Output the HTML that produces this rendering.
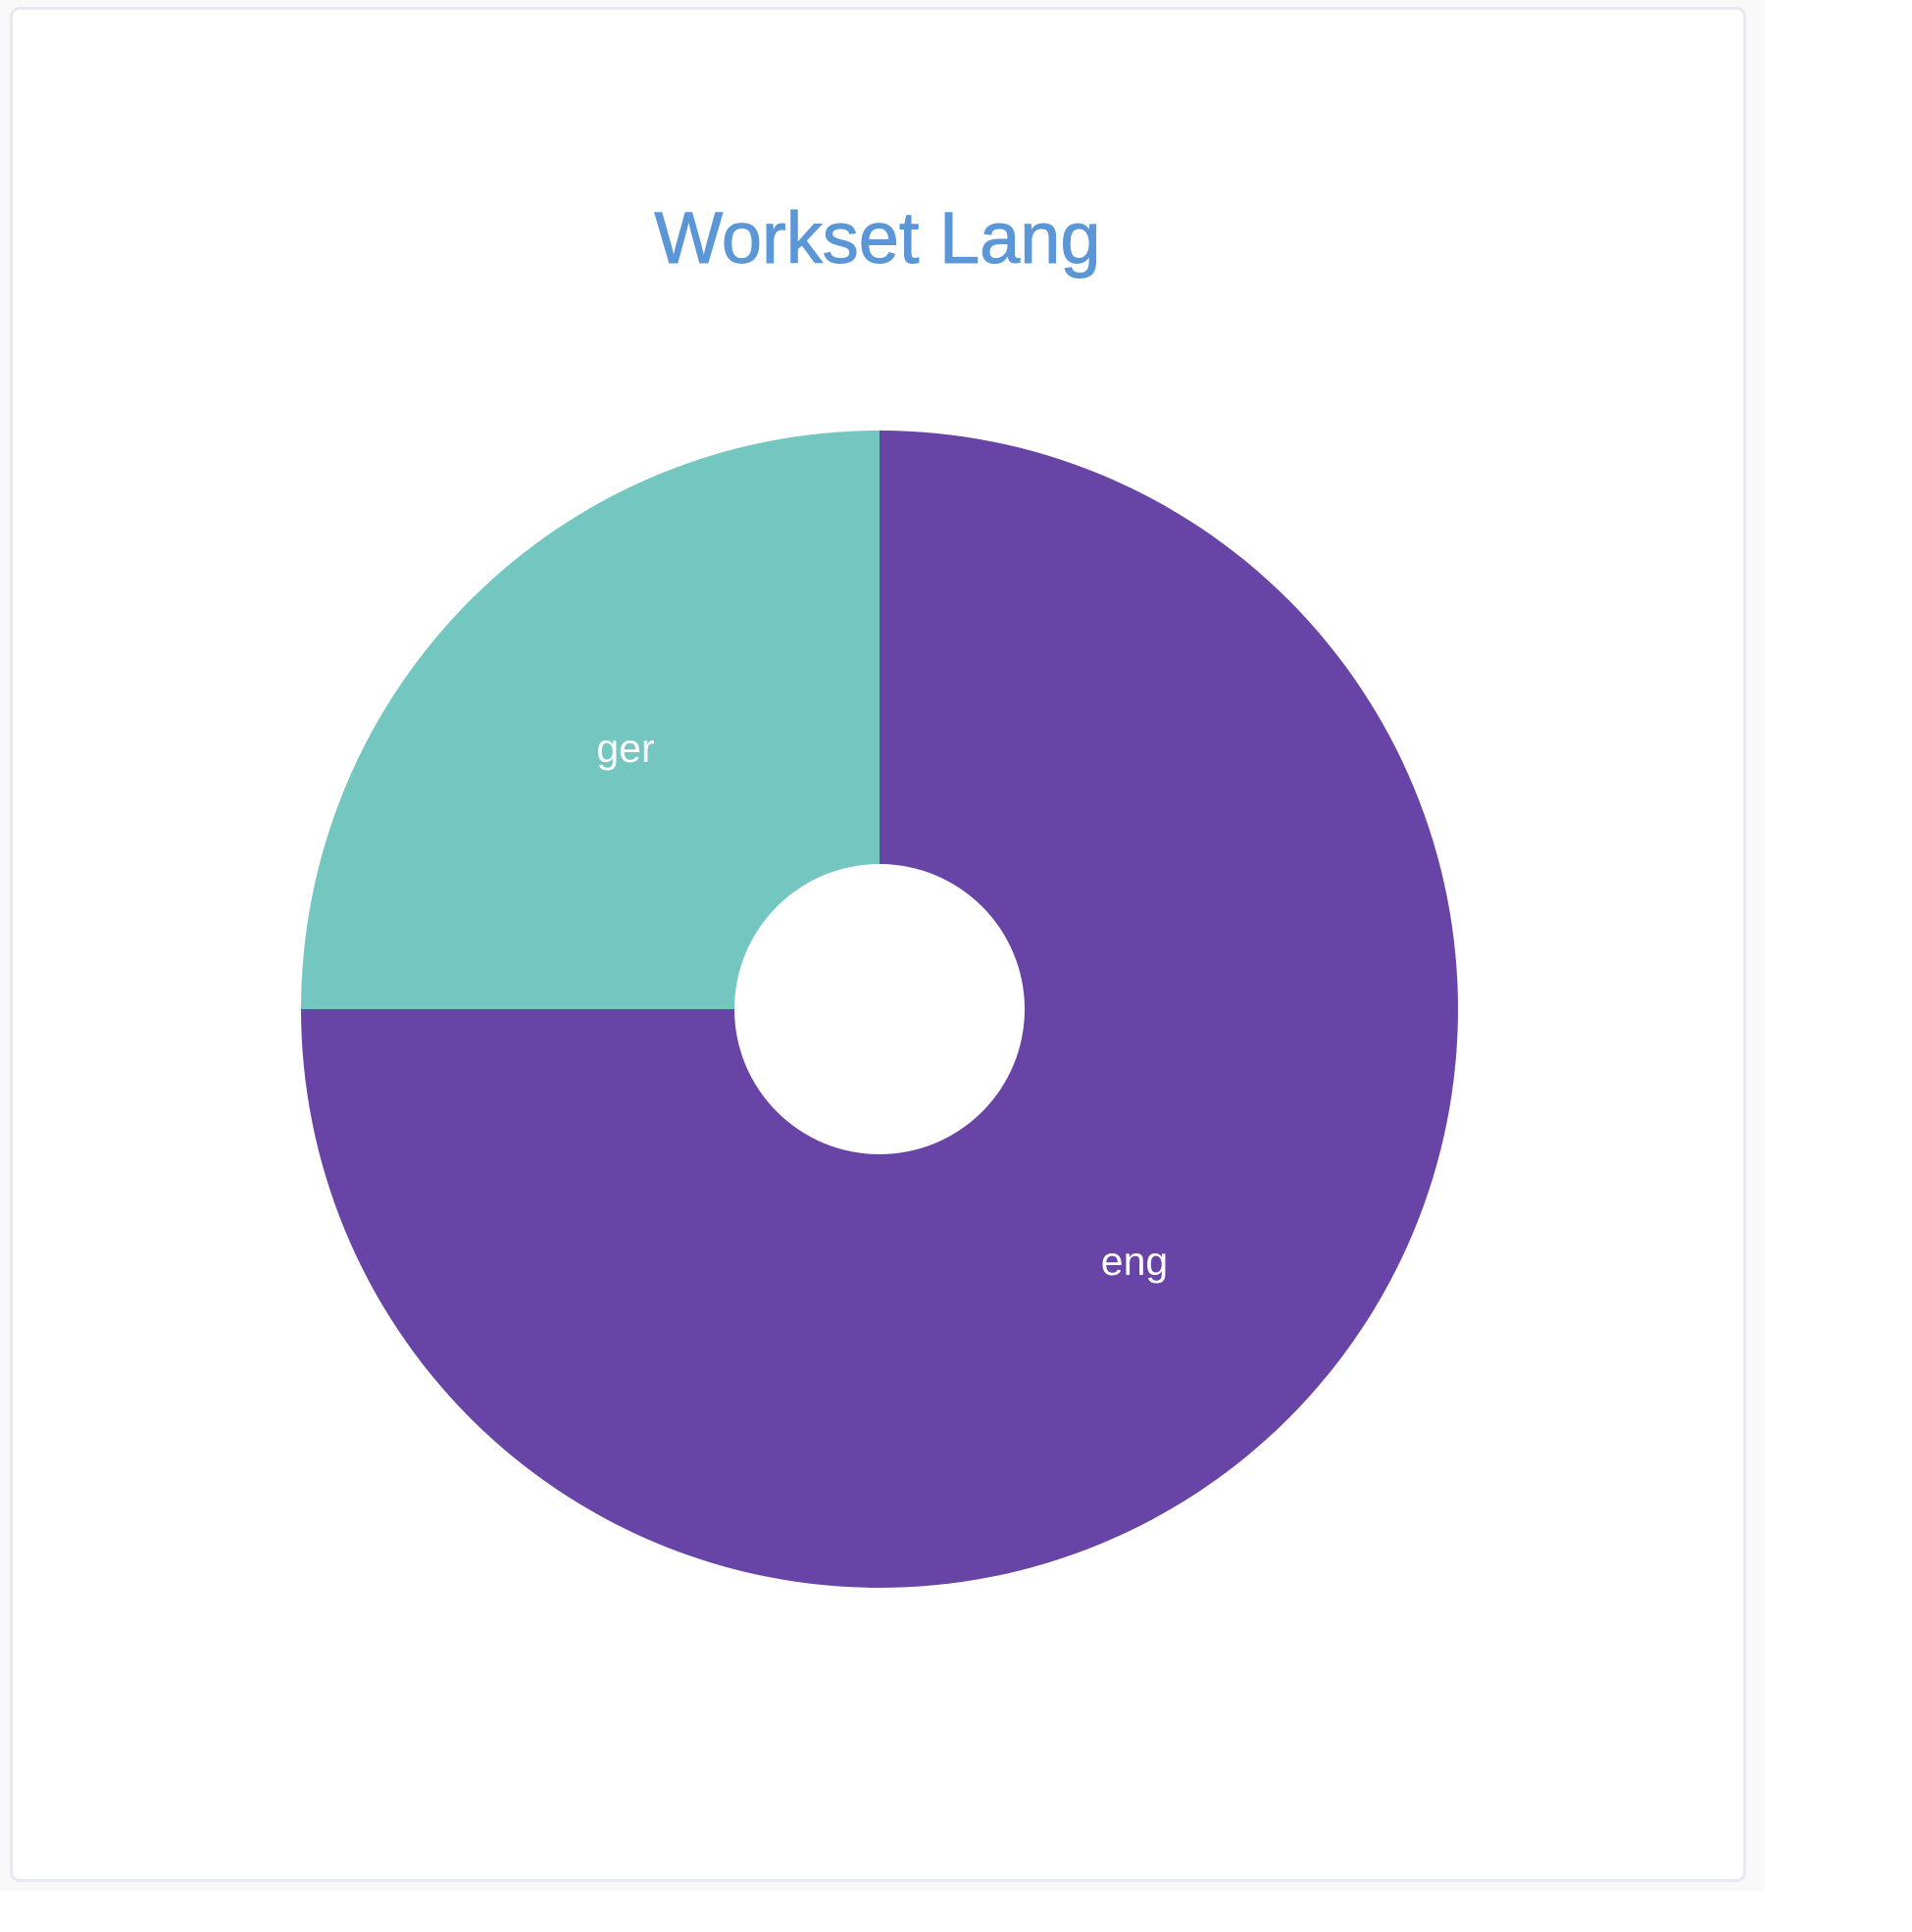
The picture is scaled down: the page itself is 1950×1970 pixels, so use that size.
<!DOCTYPE html>
<html><head><style>
html,body{margin:0;padding:0;background:#fff;width:1950px;height:1970px;overflow:hidden}
.bg{position:absolute;left:0;top:0;width:1800px;height:1928px;background:#f9f9fa}
.card{position:absolute;left:10px;top:7px;width:1765px;height:1906px;background:#fff;border:3px solid #e8e9ef;border-radius:10px}
svg{position:absolute;left:0;top:0}
</style></head><body>
<div class="bg"></div>
<div class="card"></div>
<svg width="1950" height="1970" xmlns="http://www.w3.org/2000/svg">
<text x="895" y="268" text-anchor="middle" font-family="Liberation Sans, sans-serif" font-size="74" fill="#5b96d6" stroke="#5b96d6" stroke-width="1">Workset Lang</text>
<path d="M897 1029 L897 439 A590 590 0 1 1 307 1029 Z" fill="#6744a6"/>
<path d="M897 1029 L307 1029 A590 590 0 0 1 897 439 Z" fill="#74c6c1"/>
<circle cx="897" cy="1029" r="148" fill="#fff"/>
<text x="638" y="777" text-anchor="middle" font-family="Liberation Sans, sans-serif" font-size="41" fill="#fff">ger</text>
<text x="1157" y="1300" text-anchor="middle" font-family="Liberation Sans, sans-serif" font-size="41" fill="#fff">eng</text>
</svg>
</body></html>
